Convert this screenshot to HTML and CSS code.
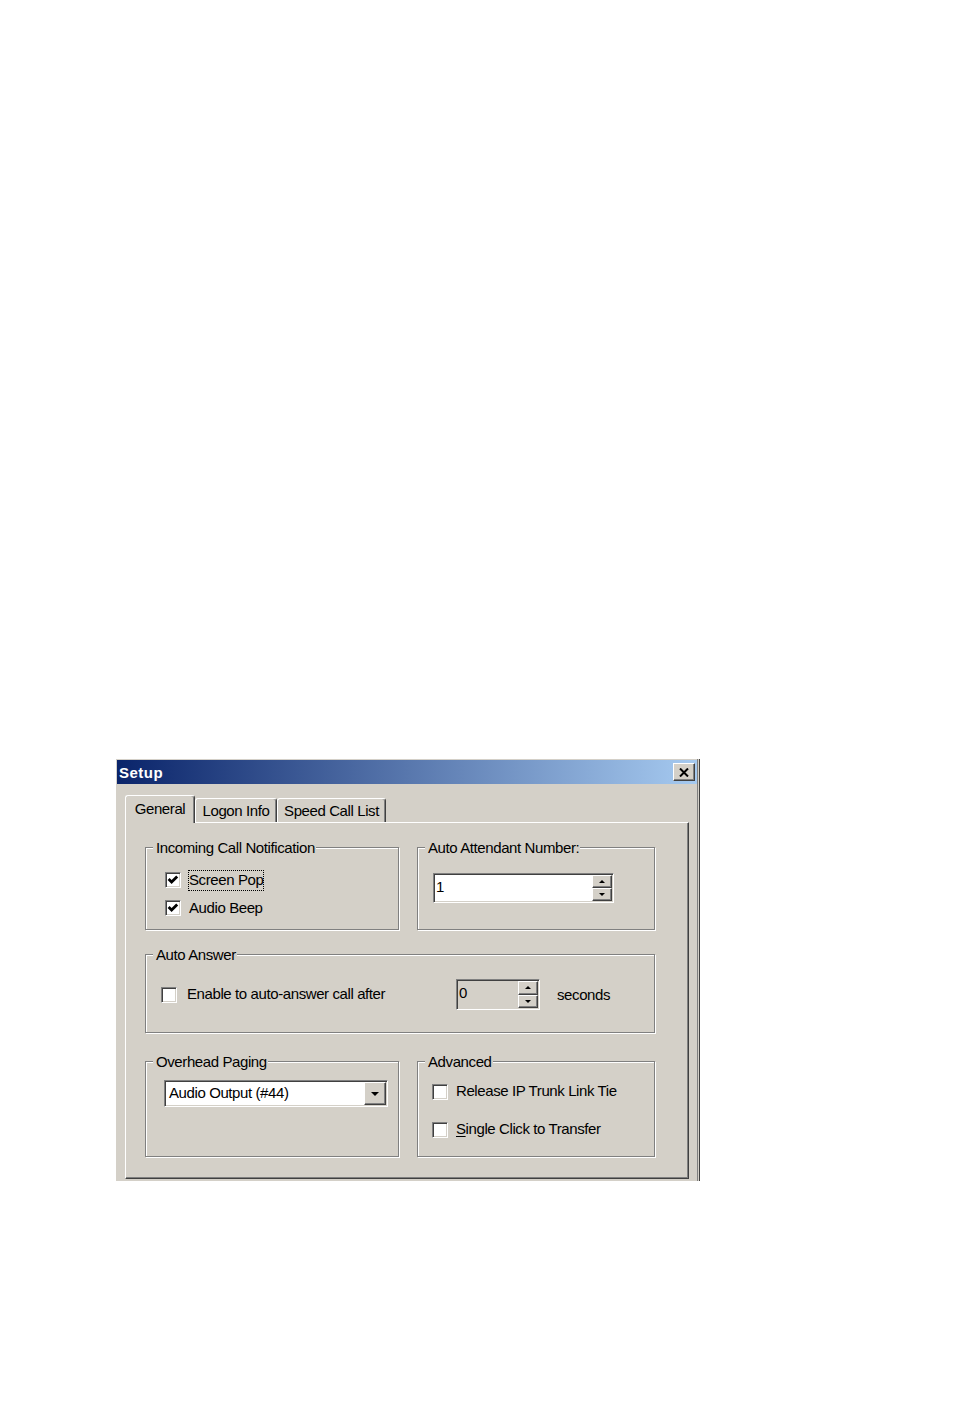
FILE: index.html
```html
<!DOCTYPE html>
<html lang="en">
<head>
  <meta charset="UTF-8">
  <title>Setup</title>
  <link rel="stylesheet" href="styles.css">
</head>
<body>
  <div class="page">
    <div class="window">
      <div class="titlebar">
        <span class="title">Setup</span>
        <span class="close-btn">
          <svg width="10" height="9" viewBox="0 0 10 9"><path d="M1 0.5 L9 8.5 M9 0.5 L1 8.5" stroke="#000" stroke-width="2" fill="none"/></svg>
        </span>
      </div>

      <div class="client">
        <div class="tabs">
          <div class="tab active tab-general">General</div>
          <div class="tab tab-logon">Logon Info</div>
          <div class="tab tab-speed">Speed Call List</div>
        </div>

        <div class="panel">
          <div class="groups">
            <!-- Incoming Call Notification -->
            <div class="group row1 incoming">
              <span class="caption">Incoming Call Notification</span>
              <div class="check-row">
                <span class="checkbox"><svg width="14" height="14" viewBox="0 0 14 14"><path d="M2.6 6 L5.6 9 L11.2 3.4" stroke="#000" stroke-width="2.8" fill="none"/></svg></span>
                <span class="label focus">Screen Pop</span>
              </div>
              <div class="check-row">
                <span class="checkbox"><svg width="14" height="14" viewBox="0 0 14 14"><path d="M2.6 6 L5.6 9 L11.2 3.4" stroke="#000" stroke-width="2.8" fill="none"/></svg></span>
                <span class="label">Audio Beep</span>
              </div>
            </div>

            <!-- Auto Attendant Number -->
            <div class="group row1 attendant">
              <span class="caption">Auto Attendant Number:</span>
              <div class="spin spin-wide">
                <span class="spin-value">1</span>
                <span class="spin-btns">
                  <span class="spin-btn"><i class="arrow-up"></i></span>
                  <span class="spin-btn"><i class="arrow-down-small"></i></span>
                </span>
              </div>
            </div>

            <!-- Auto Answer -->
            <div class="group row2 answer">
              <span class="caption">Auto Answer</span>
              <div class="answer-row">
                <div class="check-row answer-check">
                  <span class="checkbox"></span>
                  <span class="label">Enable to auto-answer call after</span>
                </div>
                <div class="spin spin-small disabled">
                  <span class="spin-value">0</span>
                  <span class="spin-btns">
                    <span class="spin-btn"><i class="arrow-up"></i></span>
                    <span class="spin-btn"><i class="arrow-down-small"></i></span>
                  </span>
                </div>
                <span class="seconds">seconds</span>
              </div>
            </div>

            <!-- Overhead Paging -->
            <div class="group row3 paging">
              <span class="caption">Overhead Paging</span>
              <div class="select">
                <span class="select-value">Audio Output (#44)</span>
                <span class="select-btn"><i class="arrow-down"></i></span>
              </div>
            </div>

            <!-- Advanced -->
            <div class="group row3 advanced">
              <span class="caption">Advanced</span>
              <div class="check-row">
                <span class="checkbox"></span>
                <span class="label raised">Release IP Trunk Link Tie</span>
              </div>
              <div class="check-row">
                <span class="checkbox"></span>
                <span class="label raised"><u>S</u>ingle Click to Transfer</span>
              </div>
            </div>
          </div>
        </div>
      </div>
    </div>
  </div>
</body>
</html>
```

FILE: styles.css
```css
body {
  margin: 0;
  background-color: #fff;
  font-family: "Liberation Sans", Arial, sans-serif;
  font-size: 15px;
  line-height: 17px;
  letter-spacing: -0.4px;
  color: #000;
}

.page {
  padding: 759px 0 0 116px;
  height: 652px;
}

.window {
  width: 584px;
  height: 422px;
  box-sizing: border-box;
  padding: 1px 3px 0 1px;
  background-color: #d4d0c8;
  box-shadow: inset -1px 0 0 #404040, inset -2px 0 0 #d4d0c8, inset -3px 0 0 #808080;
  display: flex;
  flex-direction: column;
}

/* title bar */
.titlebar {
  height: 24px;
  flex-shrink: 0;
  display: flex;
  align-items: center;
  justify-content: space-between;
  padding: 0 2px 0 2px;
  background: linear-gradient(to right, #0a246a, #a6caf0);
}

.title {
  color: #fff;
  font-weight: bold;
  letter-spacing: 0.5px;
}

.close-btn {
  width: 22px;
  height: 18px;
  box-sizing: border-box;
  display: flex;
  align-items: center;
  justify-content: center;
  background-color: #d4d0c8;
  border: 1px solid;
  border-color: #fff #404040 #404040 #fff;
  box-shadow: inset -1px -1px 0 #808080;
}

/* tabs */
.client {
  flex: 1;
  display: flex;
  flex-direction: column;
  padding: 11px 8px 2px 8px;
}

.tabs {
  height: 27px;
  flex-shrink: 0;
  display: flex;
  align-items: flex-end;
  position: relative;
  z-index: 1;
}

.tab {
  height: 24px;
  box-sizing: border-box;
  display: flex;
  align-items: center;
  justify-content: center;
  border-top: 1px solid #fff;
  border-left: 1px solid #fff;
  border-right: 1px solid #404040;
  box-shadow: inset -1px 0 0 #808080;
  border-radius: 3px 3px 0 0;
  background-color: #d4d0c8;
}

.tab.active {
  height: 28px;
  margin-bottom: -1px;
  padding-bottom: 3px;
}

.tab-general { width: 70px; }
.tab-logon { width: 82px; }
.tab-speed { width: 109px; }

.panel {
  flex: 1;
  border-top: 1px solid #fff;
  border-left: 1px solid #fff;
  border-right: 1px solid #404040;
  border-bottom: 1px solid #404040;
  box-shadow: inset -1px -1px 0 #808080;
  padding: 24px 0 0 19px;
}

.groups {
  display: grid;
  grid-template-columns: 254px 238px;
  column-gap: 18px;
  align-items: start;
}

/* group boxes */
.group {
  position: relative;
  box-sizing: border-box;
  border: 1px solid #808080;
  box-shadow: 1px 1px 0 #fff, inset 1px 1px 0 #fff;
}

.caption {
  position: absolute;
  top: -9px;
  left: 7px;
  padding: 0 1px 0 3px;
  background-color: #d4d0c8;
  white-space: nowrap;
}

.row1 { height: 83px; }
.row2 { height: 79px; margin-top: 24px; grid-column: 1 / -1; }
.row3 { height: 96px; margin-top: 28px; }

.incoming { padding: 24px 0 0 19px; }
.incoming .check-row + .check-row { margin-top: 12px; }

.attendant { padding: 25px 0 0 15px; }

.answer { padding: 24px 0 0 15px; }

.paging { padding: 18px 0 0 18px; }

.advanced { padding: 22px 0 0 14px; }
.advanced .check-row + .check-row { margin-top: 22px; }

/* checkboxes */
.check-row {
  height: 16px;
  display: flex;
  align-items: center;
  gap: 7px;
}

.checkbox {
  width: 16px;
  height: 16px;
  flex-shrink: 0;
  box-sizing: border-box;
  display: flex;
  align-items: center;
  justify-content: center;
  background-color: #fff;
  border: 1px solid;
  border-color: #808080 #fff #fff #808080;
  box-shadow: inset 1px 1px 0 #404040, inset -1px -1px 0 #d4d0c8;
}

.label {
  border: 1px solid transparent;
  padding: 0 0 2px;
  white-space: nowrap;
}

.label.raised {
  padding-bottom: 4px;
}

.label.focus {
  border: 1px dotted #000;
}

.label u {
  text-decoration-thickness: 1px;
  text-underline-offset: 2px;
}

/* spin edits */
.spin {
  box-sizing: border-box;
  display: flex;
  align-items: stretch;
  padding: 1px;
  background-color: #fff;
  border: 1px solid;
  border-color: #808080 #fff #fff #808080;
  box-shadow: inset 1px 1px 0 #404040, inset -1px -1px 0 #d4d0c8;
}

.spin.disabled {
  background-color: #d4d0c8;
}

.spin-wide {
  width: 181px;
  height: 30px;
}

.spin-small {
  width: 84px;
  height: 31px;
}

.spin-value {
  flex: 1;
  display: flex;
  align-items: center;
  padding-left: 1px;
  padding-bottom: 4px;
}

.spin-btns {
  width: 20px;
  display: flex;
  flex-direction: column;
}

.spin-btn {
  flex: 1;
  box-sizing: border-box;
  display: flex;
  align-items: center;
  justify-content: center;
  background-color: #d4d0c8;
  border: 1px solid;
  border-color: #fff #404040 #404040 #fff;
  box-shadow: inset -1px -1px 0 #808080;
}

.arrow-up {
  border-left: 3px solid transparent;
  border-right: 3px solid transparent;
  border-bottom: 3px solid #000;
}

.arrow-down-small {
  border-left: 3px solid transparent;
  border-right: 3px solid transparent;
  border-top: 3px solid #000;
}

.answer-row {
  height: 31px;
  display: flex;
  align-items: center;
}

.answer-check {
  width: 295px;
  gap: 9px;
}

.seconds {
  margin-left: 17px;
}

/* dropdown */
.select {
  width: 224px;
  height: 27px;
  box-sizing: border-box;
  display: flex;
  padding: 1px;
  background-color: #fff;
  border: 1px solid;
  border-color: #808080 #fff #fff #808080;
  box-shadow: inset 1px 1px 0 #404040, inset -1px -1px 0 #d4d0c8;
}

.select-value {
  flex: 1;
  display: flex;
  align-items: center;
  padding-left: 3px;
  padding-bottom: 2px;
}

.select-btn {
  width: 22px;
  box-sizing: border-box;
  display: flex;
  align-items: center;
  justify-content: center;
  background-color: #d4d0c8;
  border: 1px solid;
  border-color: #fff #404040 #404040 #fff;
  box-shadow: inset -1px -1px 0 #808080;
}

.arrow-down {
  border-left: 4px solid transparent;
  border-right: 4px solid transparent;
  border-top: 4px solid #000;
}
```
